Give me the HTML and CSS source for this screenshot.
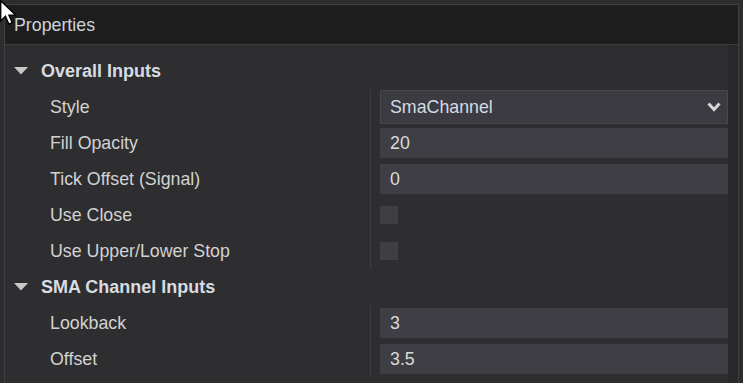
FILE: index.html
```html
<!DOCTYPE html>
<html>
	<head>
		<meta charset="utf-8"/>
		<title>Properties</title>
		<link rel="stylesheet" href="styles.css">
	</head>
	<body>
		<div id="panel">
			<div id="panel-header">Properties</div>
			<div id="panel-body">
				<div id="grid">
					<div class="group">
						<svg class="caret" width="14" height="8" viewBox="0 0 14 8"><path d="M0 0 H14 L7 7.5 Z"/></svg>
						Overall Inputs
					</div>
					<div class="row">
						<div class="label">Style</div>
						<div class="value">
							<div class="select">
								<span>SmaChannel</span>
								<svg class="chevron" width="14" height="10" viewBox="0 0 14 10"><path d="M1.5 1.5 L7 7.5 L12.5 1.5"/></svg>
							</div>
						</div>
					</div>
					<div class="row">
						<div class="label">Fill Opacity</div>
						<div class="value"><div class="field">20</div></div>
					</div>
					<div class="row">
						<div class="label">Tick Offset (Signal)</div>
						<div class="value"><div class="field">0</div></div>
					</div>
					<div class="row">
						<div class="label">Use Close</div>
						<div class="value"><div class="check"></div></div>
					</div>
					<div class="row">
						<div class="label">Use Upper/Lower Stop</div>
						<div class="value"><div class="check"></div></div>
					</div>
					<div class="group">
						<svg class="caret" width="14" height="8" viewBox="0 0 14 8"><path d="M0 0 H14 L7 7.5 Z"/></svg>
						SMA Channel Inputs
					</div>
					<div class="row">
						<div class="label">Lookback</div>
						<div class="value"><div class="field">3</div></div>
					</div>
					<div class="row">
						<div class="label">Offset</div>
						<div class="value"><div class="field">3.5</div></div>
					</div>
				</div>
				<div id="scroll-track"></div>
			</div>
		</div>
		<svg id="cursor" width="19" height="27" viewBox="0 0 14 20"><path d="M0.5 0.5 V15.5 L4 12 L6.5 17.8 L9 16.8 L6.6 11.2 H11.5 Z"/></svg>
	</body>
</html>
```

FILE: styles.css
```css
body {
	margin: 0;
	background-color: #2d2d2f;
	font-family: "Liberation Sans", Arial, sans-serif;
	font-size: 17.8px;
	color: #d2d2d2;
	height: 383px;
	overflow: hidden;
}
#panel {
	margin: 4px 4px 0 4px;
	border: 1px solid #404042;
	border-bottom: none;
	height: 379px;
	box-sizing: border-box;
	display: flex;
	flex-direction: column;
}
#panel-header {
	background-color: #1e1e1e;
	border-bottom: 1px solid #3c3c3e;
	height: 39px;
	line-height: 40px;
	padding-left: 9px;
	color: #cdd2d8;
}
#panel-body {
	flex: 1;
	display: flex;
	background-color: #2e2e30;
}
#grid {
	flex: 1;
	padding-top: 8px;
}
#scroll-track {
	width: 10px;
	background-color: #28282a;
}
.group {
	height: 36px;
	display: flex;
	align-items: center;
	padding-left: 9px;
	font-weight: bold;
	font-size: 18px;
	color: #d8dce2;
}
.caret {
	fill: #c8c8c8;
	margin-right: 13px;
}
.row {
	height: 36px;
	display: flex;
}
.label {
	width: 320px;
	padding-left: 45px;
	display: flex;
	align-items: center;
}
.value {
	flex: 1;
	border-left: 1px solid #3e3e40;
	padding-left: 9px;
	display: flex;
	align-items: center;
}
.field, .select {
	flex: 1;
	height: 30px;
	line-height: 30px;
	background-color: #3e3e44;
	padding-left: 10px;
	color: #dadada;
}
.select {
	height: 32px;
	line-height: 32px;
	border: 1px solid #46464c;
	background-color: #3b3b41;
	padding-left: 9px;
	display: flex;
	justify-content: space-between;
	align-items: center;
	margin-top: -1px;
	color: #d4dae2;
}
.chevron {
	fill: none;
	stroke: #d6d6d6;
	stroke-width: 3;
	margin-right: 6px;
}
.check {
	width: 18px;
	height: 18px;
	background-color: #3e3e43;
}
#cursor {
	position: absolute;
	left: 0;
	top: 0;
	fill: #ffffff;
	stroke: #000000;
	stroke-width: 1;
}
```
